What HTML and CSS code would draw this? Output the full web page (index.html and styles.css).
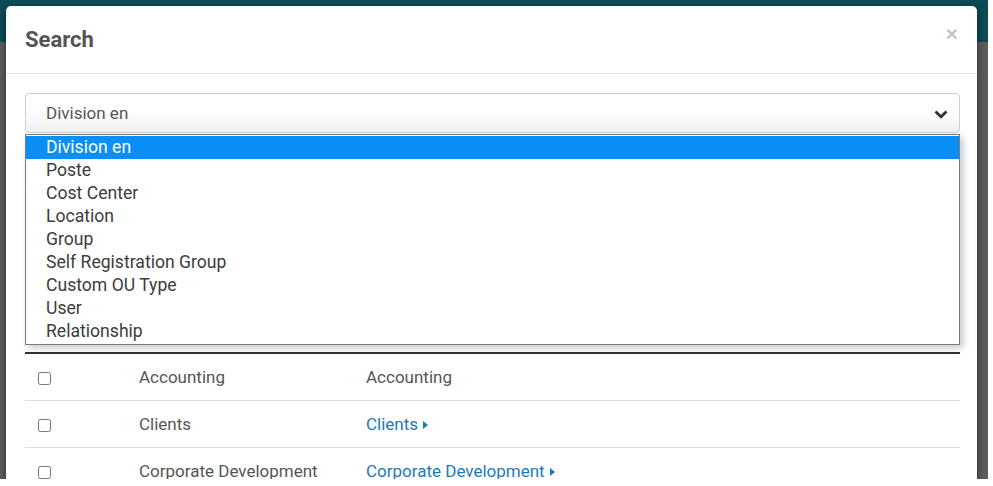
FILE: index.html
```html
<!DOCTYPE html>
<html lang="en">

<head>
    <meta charset="UTF-8">
    <meta name="viewport" content="width=device-width, initial-scale=1.0">
    <title>Search</title>
    <link rel="stylesheet" href="styles.css">
</head>

<body>
    <div class="screen">
        <div class="app-bar"></div>

        <!-- Search modal -->
        <div class="modal">
            <div class="modal-header">
                <h4>Search</h4>
                <button class="close">&times;</button>
            </div>

            <div class="modal-body">
                <div class="type-select">
                    <div class="select-box">
                        <span>Division en</span>
                        <svg width="14" height="9" viewBox="0 0 14 9">
                            <path d="M1.5 1.5 L7 6.8 L12.5 1.5" fill="none" stroke="#333" stroke-width="2.8" />
                        </svg>
                    </div>
                    <ul class="select-options">
                        <li class="selected">Division en</li>
                        <li>Poste</li>
                        <li>Cost Center</li>
                        <li>Location</li>
                        <li>Group</li>
                        <li>Self Registration Group</li>
                        <li>Custom OU Type</li>
                        <li>User</li>
                        <li>Relationship</li>
                    </ul>
                </div>

                <div class="filter-area"></div>

                <table class="results">
                    <thead>
                        <tr><th class="col-check"></th><th class="col-name"></th><th></th></tr>
                    </thead>
                    <tbody>
                        <tr>
                            <td><input type="checkbox"></td>
                            <td>Accounting</td>
                            <td>Accounting</td>
                        </tr>
                        <tr>
                            <td><input type="checkbox"></td>
                            <td>Clients</td>
                            <td><a href="#" class="drill">Clients <span class="caret"></span></a></td>
                        </tr>
                        <tr>
                            <td><input type="checkbox"></td>
                            <td>Corporate Development</td>
                            <td><a href="#" class="drill">Corporate Development <span class="caret"></span></a></td>
                        </tr>
                    </tbody>
                </table>
            </div>
        </div>
    </div>
</body>

</html>
```

FILE: styles.css
```css
body {
    margin: 0;
    background: #fff;
    font-family: Roboto, "Liberation Sans", Arial, sans-serif;
}

.screen {
    position: relative;
    width: 988px;
    height: 479px;
    overflow: hidden;
    background-color: #5d5d5d;
}

.app-bar {
    height: 42px;
    background-color: #0c4b55;
}

.modal {
    position: absolute;
    top: 6px;
    left: 6px;
    width: 971px;
    height: 560px;
    background: #fff;
    border-radius: 5px;
    box-shadow: 0 3px 9px rgba(0, 0, 0, 0.5);
}

.modal-header {
    display: flex;
    align-items: center;
    justify-content: space-between;
    height: 67px;
    padding: 0 19px;
    border-bottom: 1px solid #e5e5e5;
}

.modal-header h4 {
    margin: 0;
    font-size: 22px;
    font-weight: bold;
    color: #555;
}

.close {
    border: none;
    background: none;
    padding: 0;
    font-family: "Liberation Sans", Arial, sans-serif;
    font-size: 21px;
    font-weight: bold;
    line-height: 1;
    color: #c4c4c4;
    margin-top: -12px;
    cursor: pointer;
}

.modal-body {
    padding: 19px 17px 0 19px;
}

.type-select {
    position: relative;
}

.select-box {
    display: flex;
    align-items: center;
    justify-content: space-between;
    box-sizing: border-box;
    height: 40px;
    padding: 0 11px 0 20px;
    border: 1px solid #cfcfcf;
    border-radius: 4px;
    background: linear-gradient(#fff 40%, #f1f1f1);
    font-size: 17px;
    color: #555;
}

.select-box svg {
    margin-top: 2px;
}

.select-options {
    position: absolute;
    top: 41px;
    left: 0;
    right: 0;
    margin: 0;
    padding: 1px 0;
    list-style: none;
    background: #fff;
    border: 1px solid #7a7a7a;
    box-shadow: 3px 3px 7px rgba(0, 0, 0, 0.22);
    z-index: 2;
}

.select-options li {
    height: 23px;
    line-height: 23px;
    padding-left: 20px;
    font-size: 17.6px;
    color: #3c3c3c;
}

.select-options li.selected {
    background-color: #0a8ef8;
    color: #fff;
}

.filter-area {
    height: 219px;
}

.results {
    width: 100%;
    border-collapse: collapse;
    table-layout: fixed;
    font-size: 17px;
    color: #555;
}

.results th {
    height: 0;
    padding: 0;
    border-bottom: 2px solid #333;
}

.col-check {
    width: 102px;
}

.col-name {
    width: 227px;
}

.results td {
    height: 46px;
    padding: 0 12px;
    border-bottom: 1px solid #ddd;
    text-align: left;
    white-space: nowrap;
}

.results input[type="checkbox"] {
    width: 13px;
    height: 13px;
    margin: 0 0 0 1px;
    vertical-align: middle;
}

.drill {
    color: #1c7ab9;
    text-decoration: none;
}

.caret {
    display: inline-block;
    width: 0;
    height: 0;
    margin-left: 1px;
    border-top: 4.5px solid transparent;
    border-bottom: 4.5px solid transparent;
    border-left: 5px solid #1c7ab9;
    vertical-align: 1px;
}
```
